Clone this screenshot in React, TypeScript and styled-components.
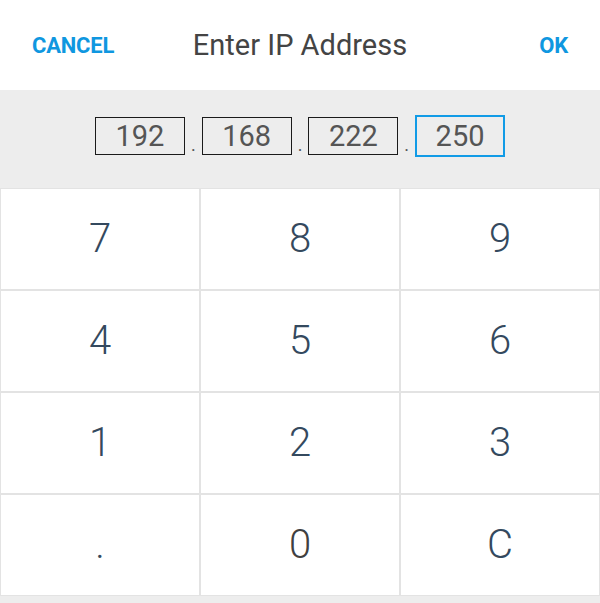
import React from "react";
import styled, { createGlobalStyle } from "styled-components";

const GlobalStyle = createGlobalStyle`
  html, body {
    margin: 0;
    padding: 0;
    background: #ededed;
    font-family: Roboto, "Noto Sans", sans-serif;
  }
  * { box-sizing: border-box; }
`;

const Dialog = styled.div`
  width: 600px;
  height: 603px;
  display: flex;
  flex-direction: column;
  background: #ededed;
`;

const Header = styled.div`
  height: 90px;
  background: #ffffff;
  display: flex;
  align-items: center;
  justify-content: space-between;
  padding: 0 32px 0 32px;
  position: relative;
`;

const ActionButton = styled.button`
  border: none;
  background: transparent;
  padding: 0;
  font-family: Roboto, sans-serif;
  font-weight: 700;
  font-size: 22px;
  color: #0f97e0;
  letter-spacing: -0.2px;
  cursor: pointer;
`;

const Title = styled.div`
  font-family: Roboto, sans-serif;
  font-size: 29px;
  font-weight: 400;
  color: #444444;
  position: absolute;
  left: 0;
  right: 0;
  text-align: center;
  pointer-events: none;
  padding-bottom: 1px;
`;

const InputBand = styled.div`
  height: 98px;
  padding: 25px 0 31px;
  display: flex;
  justify-content: center;
  align-items: center;
  background: #ededed;
`;

const Octet = styled.div<{ $focused?: boolean }>`
  width: 90px;
  height: ${(p) => (p.$focused ? "42px" : "38px")};
  border: ${(p) => (p.$focused ? "2px solid #119be6" : "1px solid #1a1a1a")};
  display: flex;
  align-items: center;
  justify-content: center;
  font-family: Roboto, sans-serif;
  font-size: 29px;
  color: #555555;
  background: transparent;
`;

const Dot = styled.span`
  width: 16.7px;
  align-self: center;
  text-align: center;
  font-family: Roboto, sans-serif;
  font-size: 18px;
  color: #555;
  padding-top: 17px;
`;

const Keypad = styled.div`
  display: grid;
  grid-template-columns: repeat(3, 200px);
  grid-auto-rows: 102px;
  background: #ffffff;
`;

const Key = styled.button<{ $tone?: string }>`
  border: 1px solid #e3e3e3;
  background: #ffffff;
  display: flex;
  align-items: center;
  justify-content: center;
  font-family: Roboto, sans-serif;
  font-weight: 300;
  font-size: 40px;
  color: ${(p) => p.$tone || "#34495e"};
  padding: 0 0 2px;
  cursor: pointer;
`;

const keys = ["7", "8", "9", "4", "5", "6", "1", "2", "3", ".", "0", "C"];
const octets = ["192", "168", "222", "250"];

export default function App() {
  return (
    <>
      <GlobalStyle />
      <Dialog>
        <Header>
          <ActionButton>CANCEL</ActionButton>
          <Title>Enter IP Address</Title>
          <ActionButton>OK</ActionButton>
        </Header>
        <InputBand>
          {octets.map((o, i) => (
            <React.Fragment key={i}>
              {i > 0 && <Dot>.</Dot>}
              <Octet $focused={i === 3}>{o}</Octet>
            </React.Fragment>
          ))}
        </InputBand>
        <Keypad>
          {keys.map((k) => (
            <Key key={k} $tone={k === "0" ? "#404040" : undefined}>
              {k}
            </Key>
          ))}
        </Keypad>
      </Dialog>
    </>
  );
}
